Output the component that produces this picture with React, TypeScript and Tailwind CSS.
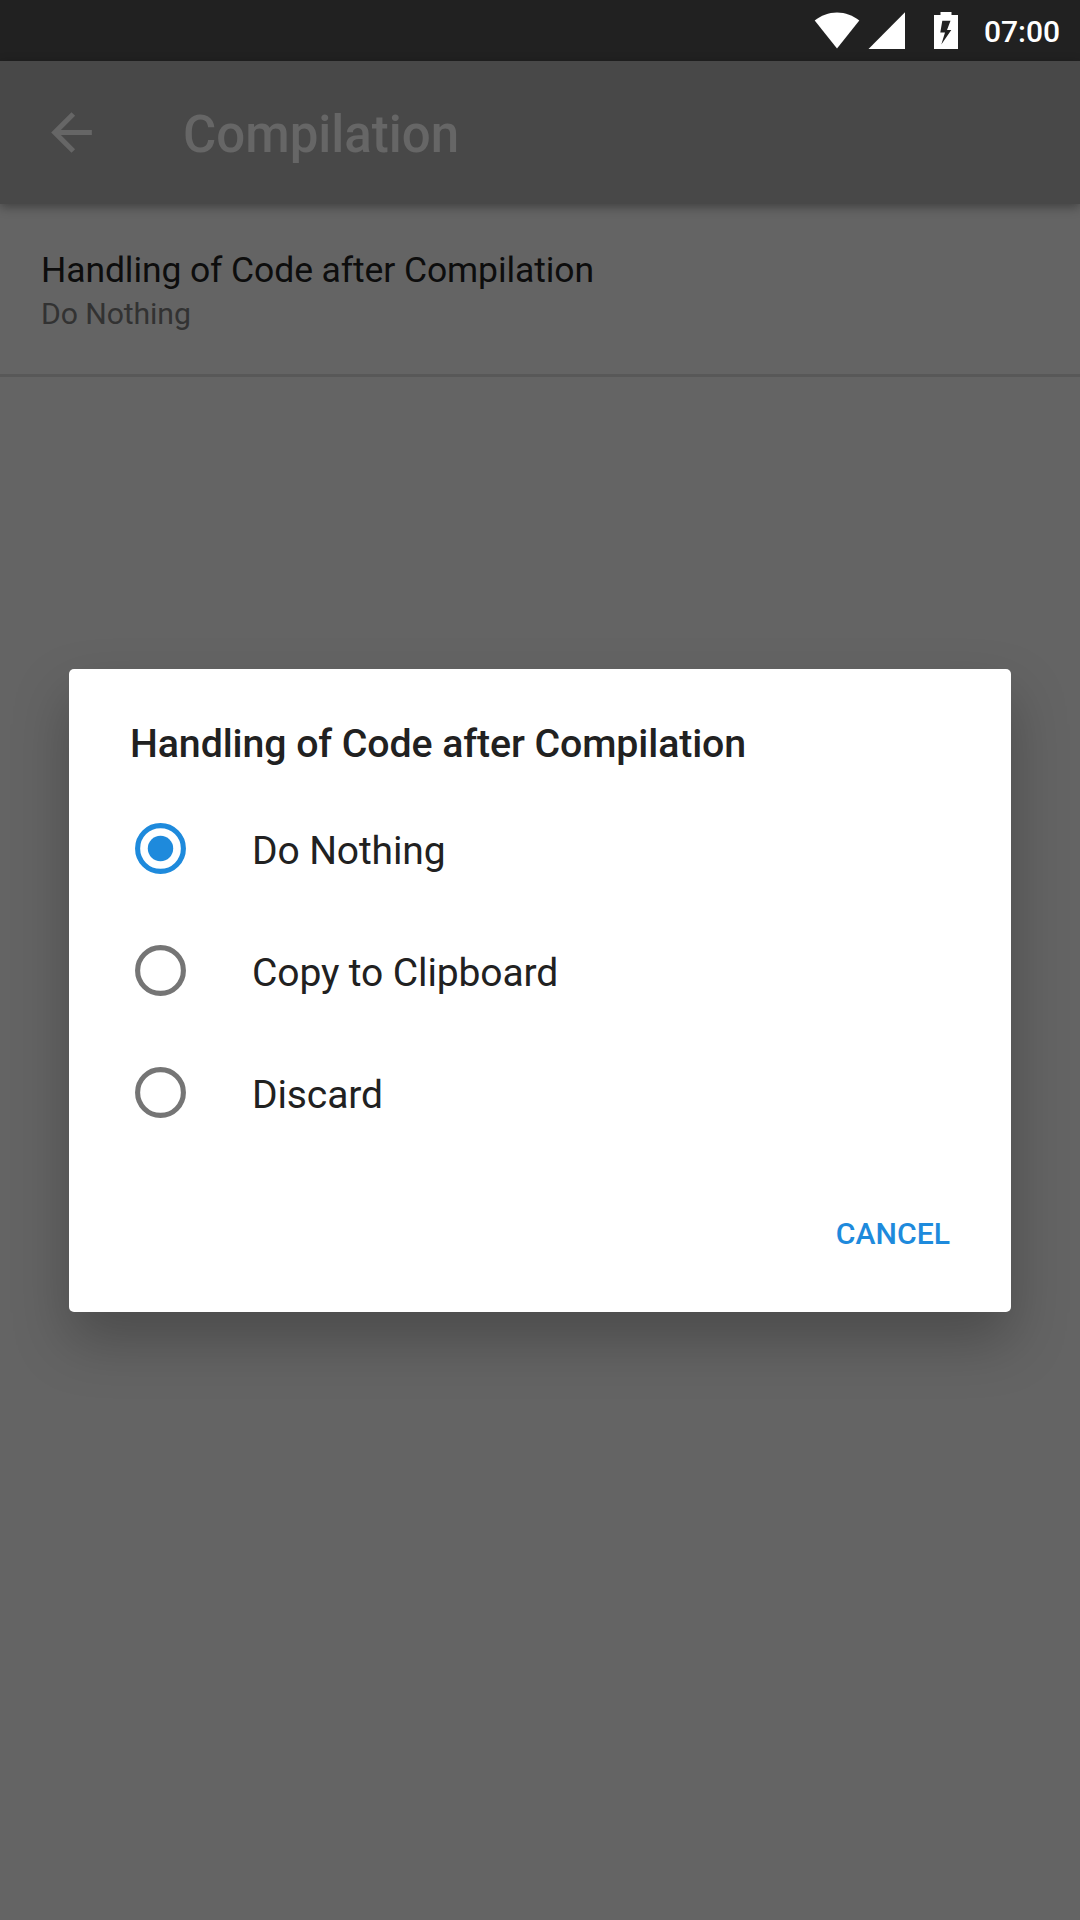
import { useState } from "react";

const options = ["Do Nothing", "Copy to Clipboard", "Discard"];

function StatusBar() {
  return (
    <header className="flex h-[61px] items-center bg-[#212121] text-white">
      <svg className="ml-[814px] h-[61px] w-[146px]" viewBox="814 0 146 61" fill="currentColor">
        <path d="M814.7 20.6C821 15.600 828.500 12.600 837 12.600S853 15.600 859.300 20.600L837 48.400Z" />
        <path d="M868.500 49H905V12.300Z" />
        <path
          fillRule="evenodd"
          d="M940.500 12H951.500V15H958V49H934V15H940.500ZM942.300 20.800L940.300 32.500H945L941.300 44.500L951.300 30H947L950.500 20.800Z"
        />
      </svg>
      <span className="ml-[24px] pt-[2px] text-[30px] font-medium leading-none">07:00</span>
    </header>
  );
}

function AppBar() {
  return (
    <div className="relative flex h-[143px] items-center bg-[#484848] pl-[41px] text-[#666666] shadow-[0_3px_10px_rgba(0,0,0,0.35)]">
      <svg className="size-[61px]" viewBox="0 0 24 24" fill="currentColor">
        <path d="M20 11H7.830l5.590-5.590L12 4l-8 8 8 8 1.410-1.410L7.830 13H20v-2z" />
      </svg>
      <h1 className="ml-[81px] pt-[4px] text-[51px] font-medium leading-none">Compilation</h1>
    </div>
  );
}

function Radio({ checked }: { checked: boolean }) {
  return (
    <svg
      className={checked ? "size-[51px] text-[#1e8adc]" : "size-[51px] text-[#757575]"}
      viewBox="0 0 51 51"
    >
      <circle cx="25.5" cy="25.5" r="22.9" fill="none" stroke="currentColor" strokeWidth="5.1" />
      {checked && <circle cx="25.5" cy="25.5" r="12.7" fill="currentColor" />}
    </svg>
  );
}

export default function App() {
  const [selected, setSelected] = useState(0);
  return (
    <div className="relative h-[1920px] w-[1080px] overflow-hidden bg-[#646464] font-['Roboto',sans-serif]">
      <StatusBar />
      <AppBar />
      <section className="flex h-[173px] flex-col border-b-[3px] border-[#585858] pl-[41px] pt-[45px]">
        <h2 className="text-[35.5px] leading-[42px] tracking-[-0.1px] text-[#0d0d0d]">
          Handling of Code after Compilation
        </h2>
        <p className="text-[30.2px] leading-[45px] tracking-[-0.1px] text-[#323232]">Do Nothing</p>
      </section>

      <div
        role="dialog"
        className="absolute left-[69px] top-[669px] flex h-[643px] w-[942px] flex-col rounded-[5px] bg-white text-[#212121] shadow-[0_28px_56px_rgba(0,0,0,0.25)]"
      >
        <h2 className="ml-[61px] mt-[51px] text-[39.3px] font-medium leading-[48px] tracking-[-0.1px]">
          Handling of Code after Compilation
        </h2>
        <div className="mt-[19px] flex flex-col">
          {options.map((label, i) => (
            <button
              key={label}
              className="flex h-[122px] items-center pl-[66px] text-left"
              onClick={() => setSelected(i)}
            >
              <Radio checked={i === selected} />
              <span className="ml-[66px] pt-[6px] text-[39px] leading-none tracking-[-0.12px]">
                {label}
              </span>
            </button>
          ))}
        </div>
        <button className="ml-auto mr-[61px] mt-[49px] text-[30.2px] font-medium leading-[64px] text-[#1e8adc]">
          CANCEL
        </button>
      </div>
    </div>
  );
}
